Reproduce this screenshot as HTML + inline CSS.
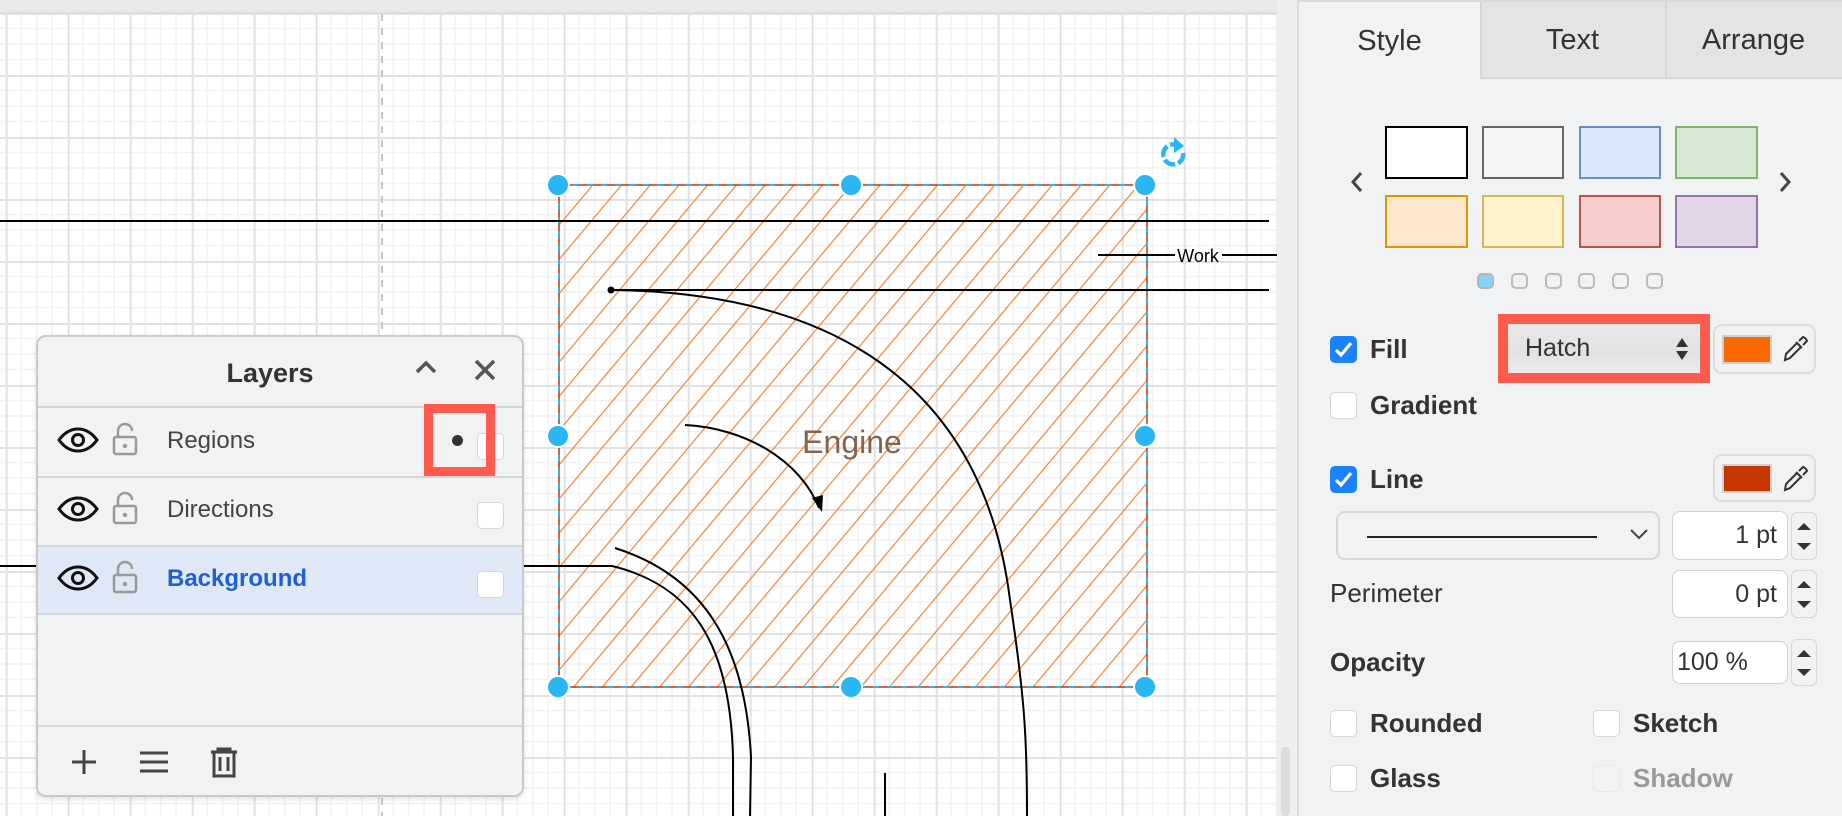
<!DOCTYPE html>
<html><head><meta charset="utf-8"><style>
*{box-sizing:border-box;margin:0;padding:0}
body{width:1842px;height:816px;overflow:hidden;background:#fff;font-family:"Liberation Sans",Arial,sans-serif;position:relative}
.abs{position:absolute}
.cb{position:absolute;width:27px;height:27px;border:1px solid #d6d6d6;border-radius:5px;background:#fff}
.cbc{background:#1a82fb;border-color:#1a82fb}
.lbl{position:absolute;font-size:26px;font-weight:bold;color:#333;line-height:30px}
.inp{position:absolute;background:#fff;border:1px solid #d0d0d0;border-radius:8px;font-size:25px;color:#333;line-height:46px}
.spin{position:absolute;width:26px;border:1px solid #d6d6d6;border-radius:6px;background:#f1f2f4}
</style></head><body>
<svg class="abs" style="left:0;top:0" width="1297" height="816">
<defs>
<pattern id="g" x="5.7" y="13" width="62" height="62" patternUnits="userSpaceOnUse">
<path d="M15.5 0V62M31 0V62M46.5 0V62M0 15.5H62M0 31H62M0 46.5H62" stroke="#f2f2f2" stroke-width="1.5"/>
<path d="M1 0V62M0 1H62" stroke="#e2e2e2" stroke-width="2"/>
</pattern>
<pattern id="h" width="22" height="22" patternUnits="userSpaceOnUse" patternTransform="rotate(40)">
<line x1="1" y1="0" x2="1" y2="22" stroke="#f87a25" stroke-width="1.1"/>
</pattern>
</defs>
<rect width="1277" height="816" fill="#fff"/>
<rect width="1277" height="816" fill="url(#g)"/>
<rect x="0" y="0" width="1297" height="13" fill="#e9e9e9"/>
<line x1="0" y1="13" x2="1277" y2="13" stroke="#d4d4d4"/>
<rect x="1277" y="0" width="20" height="816" fill="#efefef"/>
<rect x="1281" y="747" width="9" height="69" rx="4" fill="#dcdcdc"/>
<line x1="382" y1="14" x2="382" y2="816" stroke="#c4c4c4" stroke-width="2" stroke-dasharray="7,7"/>
<rect x="559" y="185" width="588" height="502" fill="url(#h)" stroke="#c73500" stroke-width="1.5"/>
<rect x="559" y="185" width="588" height="502" fill="none" stroke="#29b6f2" stroke-width="2" stroke-dasharray="6,8"/>
<line x1="0" y1="221" x2="1269" y2="221" stroke="#000" stroke-width="2"/>
<line x1="1098" y1="255" x2="1175" y2="255" stroke="#000" stroke-width="2"/>
<line x1="1222" y1="255" x2="1277" y2="255" stroke="#000" stroke-width="2"/>
<text x="1198" y="262" font-size="18" text-anchor="middle" font-family="Liberation Sans" fill="#000">Work</text>
<line x1="611" y1="290" x2="1269" y2="290" stroke="#000" stroke-width="2"/>
<circle cx="611" cy="290" r="3.5" fill="#000"/>
<path d="M611 290 C800 292 980 360 1010 600 C1025 700 1027 740 1027 816" fill="none" stroke="#000" stroke-width="2"/>
<path d="M685 425 C745 428 800 460 819 508" fill="none" stroke="#000" stroke-width="2"/>
<path d="M812 498 L822 512 L823 495 Z" fill="#000"/>
<path d="M615 548 C700 575 745 640 751 757 L750 816" fill="none" stroke="#000" stroke-width="2"/>
<path d="M0 566 L612 566 C690 585 730 640 733 757 L733 816" fill="none" stroke="#000" stroke-width="2"/>
<line x1="885" y1="773" x2="885" y2="816" stroke="#000" stroke-width="2"/>
<text x="852" y="453" font-size="32" text-anchor="middle" font-family="Liberation Sans" fill="#806550">Engine</text>
<g fill="#29b6f2" stroke="#fff" stroke-width="2">
<circle cx="558" cy="185" r="11"/><circle cx="851" cy="185" r="11"/><circle cx="1145" cy="185" r="11"/>
<circle cx="558" cy="436" r="11"/><circle cx="1145" cy="436" r="11"/>
<circle cx="558" cy="687" r="11"/><circle cx="851" cy="687" r="11"/><circle cx="1145" cy="687" r="11"/>
</g>
<path d="M1181 148 A10 10 0 1 0 1183 152" fill="none" stroke="#29b6f2" stroke-width="4.5" stroke-dasharray="12,3"/>
<path d="M1174 137 L1184 146 L1174 153 Z" fill="#29b6f2"/>
</svg>

<div class="abs" style="left:36px;top:335px;width:488px;height:462px;background:#f1f2f4;border:2px solid #c9c9c9;border-radius:10px;box-shadow:0 2px 6px rgba(0,0,0,.12);overflow:hidden">
<div class="abs" style="left:0;top:0;width:484px;height:70px;text-align:center;font-size:27px;font-weight:bold;color:#333;line-height:72px;padding-right:20px">Layers</div>
<svg class="abs" style="left:376px;top:22px" width="24" height="16"><path d="M3 13 L12 4 L21 13" fill="none" stroke="#555" stroke-width="3.5"/></svg>
<svg class="abs" style="left:435px;top:21px" width="24" height="24"><path d="M3 3 L21 21 M21 3 L3 21" stroke="#555" stroke-width="3.5"/></svg>
<div class="abs" style="left:0;top:69px;width:484px;height:2px;background:#d5d5d5"></div>
<div class="abs" style="left:0;top:139px;width:484px;height:2px;background:#d5d5d5"></div>
<div class="abs" style="left:0;top:208px;width:484px;height:70px;background:#dfe8f6;border-top:2px solid #d5d5d5;border-bottom:2px solid #d5d5d5"></div>
<div class="abs" style="left:0;top:388px;width:484px;height:2px;background:#d5d5d5"></div>
<svg class="abs" style="left:0;top:69px" width="160" height="210">
<g fill="none" stroke="#111" stroke-width="3">
<path d="M21 34 Q29 23 40 23 Q51 23 59 34 Q51 45 40 45 Q29 45 21 34Z"/><circle cx="40" cy="34" r="5.5"/>
<path d="M21 103 Q29 92 40 92 Q51 92 59 103 Q51 114 40 114 Q29 114 21 103Z"/><circle cx="40" cy="103" r="5.5"/>
<path d="M21 172 Q29 161 40 161 Q51 161 59 172 Q51 183 40 183 Q29 183 21 172Z"/><circle cx="40" cy="172" r="5.5"/>
</g>
<g fill="none" stroke="#999" stroke-width="2.5">
<rect x="76" y="31" width="22" height="17" rx="2"/><path d="M80 31 V25 A7 7 0 0 1 94 25"/>
<rect x="76" y="100" width="22" height="17" rx="2"/><path d="M80 100 V94 A7 7 0 0 1 94 94"/>
<rect x="76" y="169" width="22" height="17" rx="2"/><path d="M80 169 V163 A7 7 0 0 1 94 163"/>
</g>
<g fill="#999"><circle cx="87" cy="40" r="2.2"/><circle cx="87" cy="109" r="2.2"/><circle cx="87" cy="178" r="2.2"/></g>
</svg>
<div class="abs" style="left:129px;top:89px;font-size:24px;color:#444;line-height:30px">Regions</div>
<div class="abs" style="left:129px;top:158px;font-size:24px;color:#444;line-height:30px">Directions</div>
<div class="abs" style="left:129px;top:227px;font-size:24px;color:#1f5fd6;font-weight:bold;line-height:30px">Background</div>
<div class="cb" style="left:439px;top:96px"></div>
<div class="cb" style="left:439px;top:165px"></div>
<div class="cb" style="left:439px;top:234px"></div>
<div class="abs" style="left:414px;top:98px;width:11px;height:11px;border-radius:50%;background:#333"></div>
<div class="abs" style="left:386px;top:67px;width:71px;height:72px;border:9px solid #fe5a4d"></div>
<svg class="abs" style="left:30px;top:405px" width="190" height="40">
<path d="M16 8 V32 M4 20 H28" stroke="#444" stroke-width="3"/>
<path d="M72 11 H100 M72 20 H100 M72 29 H100" stroke="#444" stroke-width="3"/>
<path d="M143 10 H169 M150 10 V7 H162 V10 M146 10 V34 H166 V10 M152 15 V29 M160 15 V29" fill="none" stroke="#444" stroke-width="3"/>
</svg>
</div>

<div class="abs" style="left:1297px;top:0;width:545px;height:816px;background:#f1f2f4;border-left:2px solid #dadada"></div>
<div class="abs" style="left:1297px;top:0;width:545px;height:2px;background:#dadada"></div>
<div class="abs" style="left:1480px;top:2px;width:185px;height:77px;background:#e4e4e4;border-bottom:2px solid #d6d6d6;border-left:2px solid #d6d6d6"></div>
<div class="abs" style="left:1665px;top:2px;width:177px;height:77px;background:#e4e4e4;border-bottom:2px solid #d6d6d6;border-left:2px solid #d6d6d6"></div>
<div class="abs" style="left:1299px;top:22px;width:181px;text-align:center;font-size:29px;color:#333;line-height:38px">Style</div>
<div class="abs" style="left:1480px;top:21px;width:185px;text-align:center;font-size:29px;color:#333;line-height:38px">Text</div>
<div class="abs" style="left:1665px;top:21px;width:177px;text-align:center;font-size:29px;color:#333;line-height:38px">Arrange</div>
<svg class="abs" style="left:1340px;top:165px" width="470" height="35">
<path d="M21 8 L13 17 L21 26" fill="none" stroke="#444" stroke-width="3"/>
<path d="M441 8 L449 17 L441 26" fill="none" stroke="#444" stroke-width="3"/>
</svg>
<div class="abs" style="left:1385px;top:126px;width:83px;height:53px;background:#fff;border:2px solid #000"></div>
<div class="abs" style="left:1482px;top:126px;width:82px;height:53px;background:#f5f5f5;border:2px solid #666"></div>
<div class="abs" style="left:1579px;top:126px;width:82px;height:53px;background:#dae8fc;border:2px solid #6c8ebf"></div>
<div class="abs" style="left:1675px;top:126px;width:83px;height:53px;background:#d5e8d4;border:2px solid #82b366"></div>
<div class="abs" style="left:1385px;top:195px;width:83px;height:53px;background:#ffe6cc;border:2px solid #d79b00"></div>
<div class="abs" style="left:1482px;top:195px;width:82px;height:53px;background:#fff2cc;border:2px solid #d6b656"></div>
<div class="abs" style="left:1579px;top:195px;width:82px;height:53px;background:#f8cecc;border:2px solid #b85450"></div>
<div class="abs" style="left:1675px;top:195px;width:83px;height:53px;background:#e1d5e7;border:2px solid #9673a6"></div>
<div class="abs" style="left:1477px;top:273px;width:17px;height:16px;border-radius:5px;background:#86d3fa;border:2px solid #b5b5b5"></div>
<div class="abs" style="left:1511px;top:273px;width:17px;height:16px;border-radius:5px;border:2px solid #bbb"></div>
<div class="abs" style="left:1545px;top:273px;width:17px;height:16px;border-radius:5px;border:2px solid #bbb"></div>
<div class="abs" style="left:1578px;top:273px;width:17px;height:16px;border-radius:5px;border:2px solid #bbb"></div>
<div class="abs" style="left:1612px;top:273px;width:17px;height:16px;border-radius:5px;border:2px solid #bbb"></div>
<div class="abs" style="left:1646px;top:273px;width:17px;height:16px;border-radius:5px;border:2px solid #bbb"></div>

<div class="cb cbc" style="left:1330px;top:336px"><svg width="25" height="25"><path d="M5 13 L10 18 L20 6" fill="none" stroke="#fff" stroke-width="3.2"/></svg></div>
<div class="lbl" style="left:1370px;top:334px">Fill</div>
<div class="abs" style="left:1498px;top:314px;width:212px;height:69px;border:10px solid #fe5a4d"></div>
<div class="abs" style="left:1508px;top:324px;width:192px;height:49px;background:linear-gradient(#e8e8e8,#e2e2e2 60%,#ececec);"></div>
<div class="abs" style="left:1525px;top:333px;font-size:25px;color:#333;line-height:30px">Hatch</div>
<svg class="abs" style="left:1674px;top:336px" width="16" height="26"><path d="M8 2 L14 11 H2Z M8 24 L14 15 H2Z" fill="#333"/></svg>
<div class="abs" style="left:1713px;top:324px;width:103px;height:50px;border:2px solid #dcdcdc;border-radius:9px"></div>
<div class="abs" style="left:1722px;top:335px;width:50px;height:29px;background:#fa6800;border:2px solid #d0d0d0"></div>
<svg class="abs" style="left:1780px;top:334px" width="30" height="30"><path d="M5 26 L6 20 L17 9 L21 13 L10 24 Z M16 8 L22 14 M19 7 L23 3 Q26 4 27 7 L23 11" fill="none" stroke="#333" stroke-width="2"/></svg>
<div class="cb" style="left:1330px;top:392px"></div>
<div class="lbl" style="left:1370px;top:390px">Gradient</div>

<div class="cb cbc" style="left:1330px;top:466px"><svg width="25" height="25"><path d="M5 13 L10 18 L20 6" fill="none" stroke="#fff" stroke-width="3.2"/></svg></div>
<div class="lbl" style="left:1370px;top:464px">Line</div>
<div class="abs" style="left:1713px;top:454px;width:103px;height:48px;border:2px solid #dcdcdc;border-radius:9px"></div>
<div class="abs" style="left:1722px;top:464px;width:50px;height:29px;background:#c73500;border:2px solid #d0d0d0"></div>
<svg class="abs" style="left:1780px;top:464px" width="30" height="30"><path d="M5 26 L6 20 L17 9 L21 13 L10 24 Z M16 8 L22 14 M19 7 L23 3 Q26 4 27 7 L23 11" fill="none" stroke="#333" stroke-width="2"/></svg>
<div class="abs" style="left:1336px;top:511px;width:324px;height:49px;border:2px solid #d6d6d6;border-radius:9px"></div>
<div class="abs" style="left:1367px;top:536px;width:230px;height:2px;background:#222"></div>
<svg class="abs" style="left:1628px;top:526px" width="22" height="16"><path d="M3 4 L11 12 L19 4" fill="none" stroke="#444" stroke-width="2"/></svg>
<div class="inp" style="left:1672px;top:511px;width:116px;height:49px;text-align:right;padding-right:10px">1 pt</div>
<div class="spin" style="left:1791px;top:512px;height:48px"><svg width="24" height="46"><path d="M5 17 L12 10 L19 17Z M5 30 L12 37 L19 30Z" fill="#333"/></svg></div>
<div class="abs" style="left:1330px;top:578px;font-size:26px;color:#333;line-height:30px">Perimeter</div>
<div class="inp" style="left:1672px;top:570px;width:116px;height:48px;text-align:right;padding-right:10px">0 pt</div>
<div class="spin" style="left:1791px;top:570px;height:48px"><svg width="24" height="46"><path d="M5 17 L12 10 L19 17Z M5 30 L12 37 L19 30Z" fill="#333"/></svg></div>
<div class="lbl" style="left:1330px;top:647px">Opacity</div>
<div class="inp" style="left:1672px;top:641px;width:116px;height:43px;padding-left:4px;line-height:41px">100 %</div>
<div class="spin" style="left:1791px;top:639px;height:47px"><svg width="24" height="45"><path d="M5 17 L12 10 L19 17Z M5 29 L12 36 L19 29Z" fill="#333"/></svg></div>
<div class="cb" style="left:1330px;top:710px"></div>
<div class="lbl" style="left:1370px;top:708px">Rounded</div>
<div class="cb" style="left:1593px;top:710px"></div>
<div class="lbl" style="left:1633px;top:708px">Sketch</div>
<div class="cb" style="left:1330px;top:765px"></div>
<div class="lbl" style="left:1370px;top:763px">Glass</div>
<div class="cb" style="left:1593px;top:765px;background:#f3f3f3;border-color:#e8e8e8"></div>
<div class="lbl" style="left:1633px;top:763px;color:#999">Shadow</div>
</body></html>
